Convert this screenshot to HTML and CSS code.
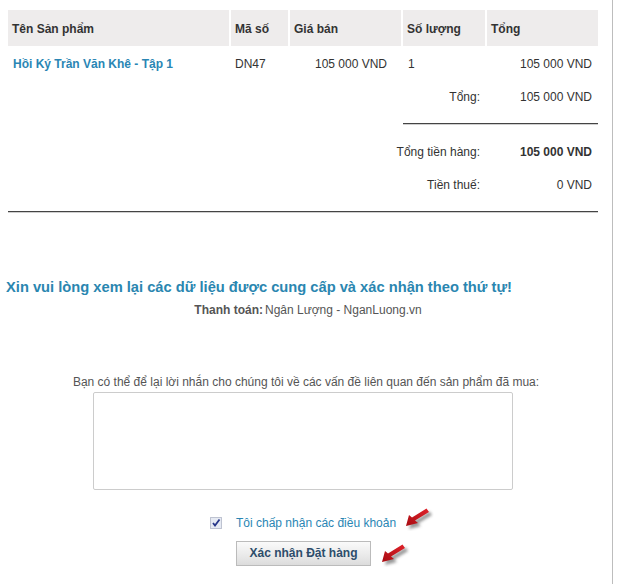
FILE: index.html
```html
<!DOCTYPE html>
<html>
<head>
<meta charset="utf-8">
<link rel="stylesheet" href="styles.css">
</head>
<body>
<div class="page">
  <table class="cart">
    <colgroup>
      <col class="c1"><col class="c2"><col class="c3"><col class="c4"><col class="c5">
    </colgroup>
    <thead>
      <tr class="head">
        <th>Tên Sản phẩm</th>
        <th>Mã số</th>
        <th>Giá bán</th>
        <th>Số lượng</th>
        <th>Tổng</th>
      </tr>
    </thead>
    <tbody>
      <tr class="row">
        <td class="pname">Hồi Ký Trần Văn Khê - Tập 1</td>
        <td>DN47</td>
        <td class="price">105 000 VND</td>
        <td class="qty">1</td>
        <td class="num">105 000 VND</td>
      </tr>
      <tr class="row">
        <td colspan="2"></td>
        <td colspan="2" class="lbl">Tổng:</td>
        <td class="num">105 000 VND</td>
      </tr>
      <tr class="sep">
        <td colspan="3"></td>
        <td colspan="2"><div class="rule"></div></td>
      </tr>
      <tr class="row">
        <td colspan="2"></td>
        <td colspan="2" class="lbl">Tổng tiền hàng:</td>
        <td class="num strong">105 000 VND</td>
      </tr>
      <tr class="row">
        <td colspan="2"></td>
        <td colspan="2" class="lbl">Tiền thuế:</td>
        <td class="num">0 VND</td>
      </tr>
      <tr class="sep">
        <td colspan="5"><div class="rule"></div></td>
      </tr>
    </tbody>
  </table>

  <h3 class="title">Xin vui lòng xem lại các dữ liệu được cung cấp và xác nhận theo thứ tự!</h3>
  <p class="pay"><b>Thanh toán:</b>Ngân Lượng - NganLuong.vn</p>

  <p class="note">Bạn có thể để lại lời nhắn cho chúng tôi về các vấn đề liên quan đến sản phẩm đã mua:</p>
  <div class="center"><textarea class="msg"></textarea></div>

  <div class="agree">
    <span class="chk"><svg width="12" height="12" viewBox="0 0 12 12"><rect x="0.5" y="0.5" width="11" height="11" fill="#e6eaf3" stroke="#8b93a8" stroke-dasharray="1 1"/><path d="M3 6 L5 8.5 L9.5 2.5" fill="none" stroke="#27378a" stroke-width="1.8"/></svg></span>
    <span class="terms">Tôi chấp nhận các điều khoản</span>
    <span class="arrow a1"><svg width="30" height="26" viewBox="0 0 30 26"><defs><filter id="b" x="-50%" y="-50%" width="200%" height="200%"><feGaussianBlur stdDeviation="1.4"/></filter><linearGradient id="g" x1="0" y1="1" x2="1" y2="0"><stop offset="0" stop-color="#a80c12"/><stop offset="1" stop-color="#e0222a"/></linearGradient></defs><path d="M2 21 L5 10 L8 12.5 L22.5 3.5 L25 7 L11 15.5 L14 18 Z" fill="#444" opacity="0.55" filter="url(#b)" transform="translate(3 3)"/><path d="M2 21 L5 10 L8 12.5 L22.5 3.5 L25 7 L11 15.5 L14 18 Z" fill="url(#g)"/></svg></span>
  </div>
  <div class="btnrow">
    <button class="btn">Xác nhận Đặt hàng</button>
    <span class="arrow a2"><svg width="30" height="26" viewBox="0 0 30 26"><path d="M2 21 L5 10 L8 12.5 L22.5 3.5 L25 7 L11 15.5 L14 18 Z" fill="#444" opacity="0.55" filter="url(#b)" transform="translate(3 3)"/><path d="M2 21 L5 10 L8 12.5 L22.5 3.5 L25 7 L11 15.5 L14 18 Z" fill="url(#g)"/></svg></span>
  </div>
</div>
</body>
</html>
```

FILE: styles.css
```css
html, body {
  margin: 0;
  padding: 0;
  background: #fff;
}
.page {
  width: 613px;
  min-height: 584px;
  border-right: 1px solid #bdbdbd;
  box-sizing: border-box;
  font-family: "Liberation Sans", Arial, sans-serif;
  font-size: 12px;
  color: #333;
  padding-top: 8px;
}
.cart {
  margin-left: 6px;
  width: 594px;
  border-collapse: separate;
  border-spacing: 2px;
  table-layout: fixed;
}
.c1 { width: 221px; }
.c2 { width: 57px; }
.c3 { width: 111px; }
.c4 { width: 82px; }
.c5 { width: 111px; }
.cart th {
  background: #eeecec;
  height: 34px;
  padding: 2px 4px 0;
  text-align: left;
  font-weight: bold;
  color: #333;
}
.cart td {
  padding: 1px 4px 0;
  height: 30px;
}
.pname {
  color: #2a86b4;
  font-weight: bold;
  padding-left: 5px !important;
}
.price {
  text-align: right;
  padding-right: 14px !important;
}
.qty { padding-left: 5px !important; }
.num {
  text-align: right;
  padding-right: 6px !important;
}
.lbl {
  text-align: right;
  padding-right: 5px !important;
  white-space: nowrap;
}
.strong { font-weight: bold; }
.cart tr.sep td {
  height: 20px;
  padding: 0;
}
.rule {
  border-top: 1px solid #444;
  border-bottom: 1px solid #cfcfcf;
  height: 0;
}
.title {
  margin: 54px 0 0 6px;
  font-size: 14.7px;
  font-weight: bold;
  color: #2a86b0;
  line-height: 18px;
}
.pay {
  margin: 7px 0 0;
  text-align: center;
  color: #555;
  line-height: 14px;
  padding-left: 4px;
}
.pay b { color: #555; margin-right: 2px; }
.note {
  margin: 58px 0 0;
  text-align: center;
  color: #555;
  line-height: 14px;
}
.center {
  text-align: center;
  margin-top: 3px;
}
.msg {
  display: inline-block;
  width: 420px;
  height: 98px;
  box-sizing: border-box;
  border: 1px solid #ccc;
  border-radius: 2px;
  resize: none;
  margin: 0 0 0 -6px;
  vertical-align: top;
}
.agree {
  margin-top: 23px;
  display: flex;
  align-items: center;
  padding-left: 210px;
  height: 20px;
}
.chk {
  width: 12px;
  height: 12px;
  display: inline-flex;
}
.terms {
  margin-left: 14px;
  color: #2a86b4;
  font-size: 12px;
}
.arrow {
  display: inline-flex;
  position: relative;
}
.a1 { margin-left: 8px; top: -5px; }
.btnrow {
  margin-top: 7px;
  display: flex;
  align-items: center;
  padding-left: 236px;
}
.btn {
  width: 135px;
  height: 25px;
  border: 1px solid #bbb;
  border-radius: 0;
  background: linear-gradient(#fafafa, #e9e9e9 60%, #dcdcdc);
  font-family: "Liberation Sans", Arial, sans-serif;
  font-weight: bold;
  font-size: 12px;
  color: #2d4d6b;
  padding: 0;
}
.a2 { margin-left: 9px; top: 1px; }
```
